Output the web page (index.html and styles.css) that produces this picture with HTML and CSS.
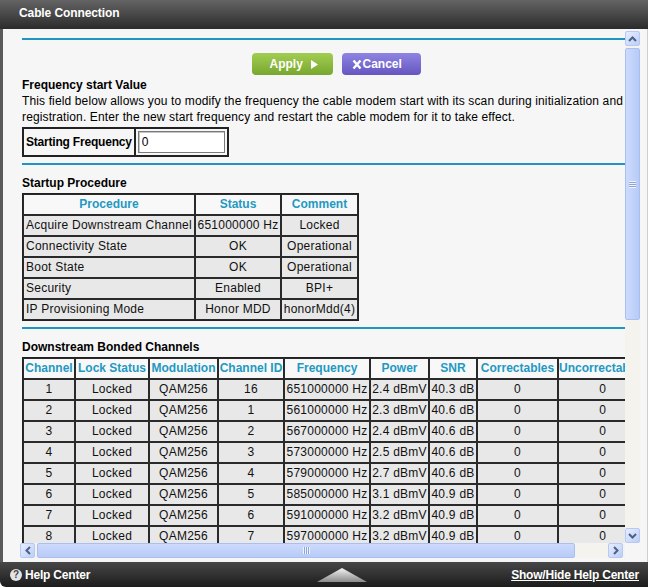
FILE: index.html
```html
<!DOCTYPE html>
<html lang="en">
<head>
    <meta charset="UTF-8">
    <title>Cable Connection</title>
    <link rel="stylesheet" href="styles.css">
</head>
<body>
<div class="window">
    <div class="title-bar">Cable Connection</div>

    <div class="main">
        <div class="scroll-box">
            <div class="viewport">
                <div class="page">
                    <div class="rule"></div>

                    <div class="buttons">
                        <span class="btn btn-apply">Apply
                            <svg width="7" height="9" viewBox="0 0 7 9"><polygon points="0,0 7,4.5 0,9" fill="#fff"/></svg>
                        </span>
                        <span class="btn btn-cancel">
                            <svg width="10" height="11" viewBox="0 0 10 11"><path d="M1.5 1.5 L8.5 9.5 M8.5 1.5 L1.5 9.5" stroke="#fff" stroke-width="2.4"/></svg>Cancel
                        </span>
                    </div>

                    <h2>Frequency start Value</h2>
                    <p>This field below allows you to modify the frequency the cable modem start with its scan during initialization and registration. Enter the new start frequency and restart the cable modem for it to take effect.</p>
                    <table class="freq-table">
                        <tr>
                            <td class="freq-label">Starting Frequency</td>
                            <td class="freq-input"><input type="text" value="0"></td>
                        </tr>
                    </table>

                    <div class="rule"></div>

                    <h2>Startup Procedure</h2>
                    <table class="grid startup">
                        <colgroup><col class="s1"><col class="s2"><col class="s3"></colgroup>
                        <tr><th>Procedure</th><th>Status</th><th>Comment</th></tr>
                        <tr><td class="left">Acquire Downstream Channel</td><td>651000000 Hz</td><td>Locked</td></tr>
                        <tr><td class="left">Connectivity State</td><td>OK</td><td>Operational</td></tr>
                        <tr><td class="left">Boot State</td><td>OK</td><td>Operational</td></tr>
                        <tr><td class="left">Security</td><td>Enabled</td><td>BPI+</td></tr>
                        <tr><td class="left">IP Provisioning Mode</td><td>Honor MDD</td><td>honorMdd(4)</td></tr>
                    </table>

                    <div class="rule"></div>

                    <h2>Downstream Bonded Channels</h2>
                    <table class="grid downstream">
                        <colgroup>
                            <col class="d1"><col class="d2"><col class="d3"><col class="d4"><col class="d5">
                            <col class="d6"><col class="d7"><col class="d8"><col class="d9">
                        </colgroup>
                        <tr><th>Channel</th><th>Lock Status</th><th>Modulation</th><th>Channel ID</th><th>Frequency</th><th>Power</th><th>SNR</th><th>Correctables</th><th>Uncorrectables</th></tr>
                        <tr><td>1</td><td>Locked</td><td>QAM256</td><td>16</td><td>651000000 Hz</td><td>2.4 dBmV</td><td>40.3 dB</td><td>0</td><td>0</td></tr>
                        <tr><td>2</td><td>Locked</td><td>QAM256</td><td>1</td><td>561000000 Hz</td><td>2.3 dBmV</td><td>40.6 dB</td><td>0</td><td>0</td></tr>
                        <tr><td>3</td><td>Locked</td><td>QAM256</td><td>2</td><td>567000000 Hz</td><td>2.4 dBmV</td><td>40.6 dB</td><td>0</td><td>0</td></tr>
                        <tr><td>4</td><td>Locked</td><td>QAM256</td><td>3</td><td>573000000 Hz</td><td>2.5 dBmV</td><td>40.6 dB</td><td>0</td><td>0</td></tr>
                        <tr><td>5</td><td>Locked</td><td>QAM256</td><td>4</td><td>579000000 Hz</td><td>2.7 dBmV</td><td>40.6 dB</td><td>0</td><td>0</td></tr>
                        <tr><td>6</td><td>Locked</td><td>QAM256</td><td>5</td><td>585000000 Hz</td><td>3.1 dBmV</td><td>40.9 dB</td><td>0</td><td>0</td></tr>
                        <tr><td>7</td><td>Locked</td><td>QAM256</td><td>6</td><td>591000000 Hz</td><td>3.2 dBmV</td><td>40.9 dB</td><td>0</td><td>0</td></tr>
                        <tr><td>8</td><td>Locked</td><td>QAM256</td><td>7</td><td>597000000 Hz</td><td>3.2 dBmV</td><td>40.9 dB</td><td>0</td><td>0</td></tr>
                    </table>
                </div>
            </div>

            <!-- fake XP style scrollbars -->
            <div class="vscroll">
                <div class="sb-btn">
                    <svg width="9" height="6" viewBox="0 0 9 6"><path d="M1 5 L4.5 1.5 L8 5" fill="none" stroke="#4d6185" stroke-width="2"/></svg>
                </div>
                <div class="sb-thumb v-thumb"><span class="grip"></span></div>
                <div class="sb-track"></div>
                <div class="sb-btn">
                    <svg width="9" height="6" viewBox="0 0 9 6"><path d="M1 1 L4.5 4.5 L8 1" fill="none" stroke="#4d6185" stroke-width="2"/></svg>
                </div>
            </div>
            <div class="hscroll">
                <div class="sb-btn">
                    <svg width="6" height="9" viewBox="0 0 6 9"><path d="M5 1 L1.5 4.5 L5 8" fill="none" stroke="#4d6185" stroke-width="2"/></svg>
                </div>
                <div class="sb-thumb h-thumb"><span class="grip"></span></div>
                <div class="sb-track"></div>
                <div class="sb-btn">
                    <svg width="6" height="9" viewBox="0 0 6 9"><path d="M1 1 L4.5 4.5 L1 8" fill="none" stroke="#4d6185" stroke-width="2"/></svg>
                </div>
            </div>
            <div class="corner"></div>
        </div>
    </div>

    <div class="footer">
        <div class="help">
            <span class="help-icon">?</span>Help Center
        </div>
        <svg class="toggle" width="50" height="14" viewBox="0 0 50 14">
            <defs>
                <linearGradient id="tri" x1="0" y1="0" x2="0" y2="1">
                    <stop offset="0" stop-color="#f4f4f4"/>
                    <stop offset="1" stop-color="#8a8a8a"/>
                </linearGradient>
            </defs>
            <polygon points="25,0 50,14 0,14" fill="url(#tri)"/>
        </svg>
        <a class="show-hide" href="#">Show/Hide Help Center</a>
    </div>
</div>
</body>
</html>
```

FILE: styles.css
```css
body {
    margin: 0;
    font-family: "Liberation Sans", Arial, sans-serif;
    font-size: 12px;
    color: #000;
}
.window {
    width: 648px;
    height: 587px;
    display: flex;
    flex-direction: column;
    overflow: hidden;
}
.title-bar {
    height: 29px;
    line-height: 27px;
    padding-left: 19px;
    background: linear-gradient(#646464, #2b2b2b);
    color: #fff;
    font-weight: bold;
    font-size: 12px;
    letter-spacing: -0.1px;
}
.main {
    flex: 1;
    border-left: 3px solid #5a5a5a;
    border-right: 1px solid #cfcfcf;
    background: #f6f6f6;
    padding: 2px 7px 4px 17px;
}
.scroll-box {
    display: grid;
    grid-template-columns: 605px 15px;
    grid-template-rows: 512px 15px;
}
.viewport {
    overflow: hidden;
}
.page {
    width: 628px;
    padding: 7px 0 0 2px;
}
.rule {
    height: 2px;
    background: #1f95bf;
}
.buttons {
    display: flex;
    justify-content: center;
    gap: 9px;
    margin-top: 13px;
}
.btn {
    height: 22px;
    border-radius: 4px;
    color: #fff;
    font-weight: bold;
    display: flex;
    align-items: center;
    box-sizing: border-box;
}
.btn-apply {
    width: 81px;
    padding-left: 18px;
    gap: 8px;
    background: linear-gradient(#a2cd52, #78a72f);
}
.btn-cancel {
    width: 79px;
    padding-left: 10px;
    gap: 1px;
    background: linear-gradient(#8f84e2, #6556c0);
}
h2 {
    font-size: 12px;
    margin: 2px 0 0;
    line-height: 16px;
}
p {
    margin: 0;
    line-height: 16px;
    letter-spacing: 0.13px;
}
.freq-table {
    margin-top: 2px;
    border: 1px solid #222;
    border-spacing: 0;
}
.freq-table td {
    border: 1px solid #222;
    padding: 2px;
}
.freq-label {
    font-weight: bold;
    letter-spacing: -0.2px;
    padding-right: 1px;
}
.freq-input input {
    width: 87px;
    height: 22px;
    box-sizing: border-box;
    border: 1px solid #7a7a7a;
    box-shadow: inset 1px 1px 0 #c4c4c4;
    font: 12px "Liberation Sans", Arial, sans-serif;
    padding: 0 3px;
    margin: 0;
    display: block;
}
.rule + h2 {
    margin-top: 10px;
}
.freq-table + .rule {
    margin-top: 6px;
}
.grid {
    margin-top: 2px;
    border: 1px solid #222;
    border-spacing: 0;
    table-layout: fixed;
}
.grid th, .grid td {
    border: 1px solid #2a2a2a;
    padding: 0;
    height: 19px;
    line-height: 19px;
    text-align: center;
    white-space: nowrap;
    overflow: hidden;
}
.grid th {
    color: #2398c2;
    background: #f8f8f8;
}
.grid td {
    background: #e8e8e8;
    color: #111;
    letter-spacing: 0.25px;
}
.grid td.left {
    text-align: left;
    padding-left: 2px;
}
.startup + .rule {
    margin-top: 6px;
}
.s1 { width: 172px; }
.s2 { width: 86px; }
.s3 { width: 77px; }
.d1 { width: 52px; }
.d2 { width: 74px; }
.d3 { width: 69px; }
.d4 { width: 66px; }
.d5 { width: 86px; }
.d6 { width: 59px; }
.d7 { width: 48px; }
.d8 { width: 81px; }
.d9 { width: 89px; }

/* scrollbars */
.vscroll, .hscroll {
    display: flex;
    background: #f4f3ee;
}
.vscroll {
    flex-direction: column;
}
.sb-btn {
    width: 15px;
    height: 15px;
    flex: none;
    box-sizing: border-box;
    border: 1px solid #b6c8f3;
    border-radius: 2px;
    background: linear-gradient(135deg, #e6edfe, #bccff9);
    display: flex;
    align-items: center;
    justify-content: center;
}
.sb-thumb {
    box-sizing: border-box;
    border: 1px solid #a9bff2;
    border-radius: 2px;
    display: flex;
    align-items: center;
    justify-content: center;
}
.v-thumb {
    height: 272px;
    margin-top: 2px;
    background: linear-gradient(90deg, #cddafc, #b7cbf7);
}
.h-thumb {
    width: 538px;
    margin-left: 2px;
    background: linear-gradient(#cddafc, #b7cbf7);
}
.sb-track {
    flex: 1;
}
.grip {
    width: 7px;
    height: 7px;
    background: repeating-linear-gradient(#eef3ff 0 1px, #8ea5d8 1px 2px);
}
.h-thumb .grip {
    background: repeating-linear-gradient(90deg, #eef3ff 0 1px, #8ea5d8 1px 2px);
}
.hscroll .sb-btn:last-child {
    margin-right: 2px;
}
.corner {
    background: #f6f6f6;
}

/* footer */
.footer {
    height: 25px;
    flex: none;
    display: flex;
    align-items: center;
    background: linear-gradient(#474747, #1c1c1c);
    border-bottom-left-radius: 6px;
    color: #fff;
    font-weight: bold;
    font-size: 12px;
    letter-spacing: -0.2px;
}
.help {
    width: 307px;
    padding-left: 10px;
    display: flex;
    align-items: center;
    gap: 3px;
}
.help-icon {
    width: 12px;
    height: 12px;
    border-radius: 50%;
    background: #e4e4e4;
    color: #444;
    font-size: 10px;
    line-height: 12px;
    text-align: center;
    letter-spacing: 0;
}
.toggle {
    margin-top: 1px;
}
.show-hide {
    margin-left: auto;
    margin-right: 9px;
    color: #fff;
}
```
